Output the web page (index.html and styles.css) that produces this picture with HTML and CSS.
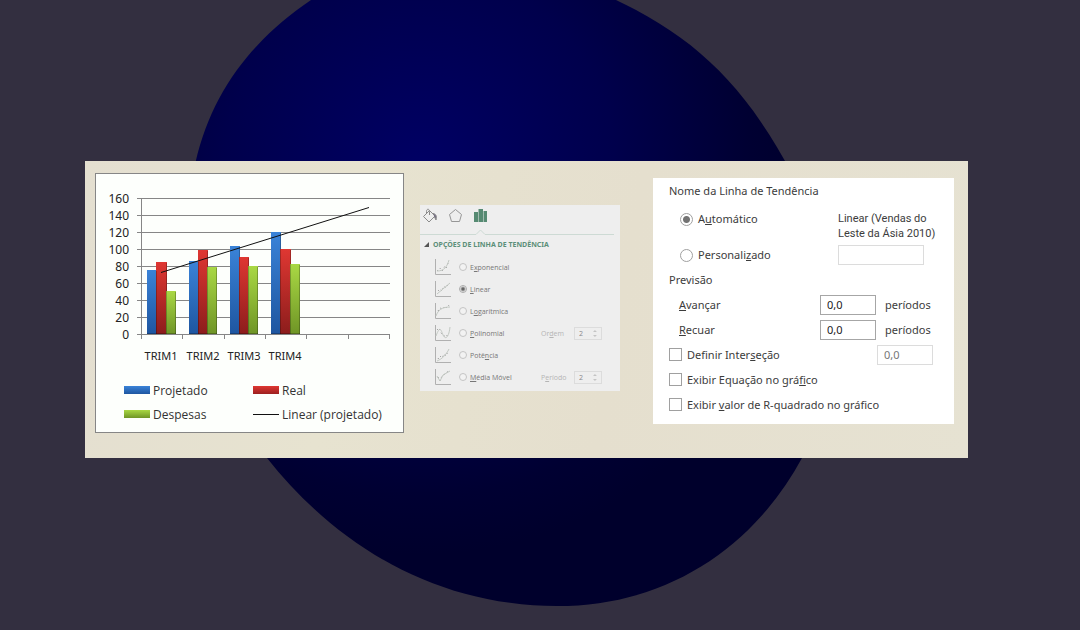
FILE: index.html
```
<!DOCTYPE html>
<html lang="pt-BR">
<head>
  <meta charset="UTF-8">
  <title>Linha de Tendência</title>
  <meta name="viewport" content="width=device-width, initial-scale=1.0">
  <link rel="stylesheet" href="styles.css">
</head>
<body>
  <!-- Blue shape behind the card -->
  <svg class="backdrop" viewBox="0 0 1080 630" preserveAspectRatio="xMidYMid slice" aria-hidden="true">
    <defs>
      <radialGradient id="glow" gradientUnits="userSpaceOnUse" cx="420" cy="165" r="390">
        <stop offset="0" stop-color="#000064"/>
        <stop offset="0.5" stop-color="#00004c"/>
        <stop offset="0.85" stop-color="#000032"/>
        <stop offset="1" stop-color="#00002c"/>
      </radialGradient>
    </defs>
    <path fill="url(#glow)" d="M311 0C230 55 188 130 188 235C188 340 230 415 267 458C340 550 440 606 557 606C670 606 755 545 802 458C850 360 840 260 785 161C740 80 690 35 616 0C520 -60 400 -60 311 0Z"/>
  </svg>

  <main class="card">
    <!-- Chart -->
    <section class="chart">
      <svg class="plot" viewBox="0 0 307 198" role="img" aria-label="Projetado, Real e Despesas por trimestre">
        <defs>
          <linearGradient id="blue" x2="0" y2="1"><stop stop-color="#3a83d8"/><stop offset="1" stop-color="#1e56a0"/></linearGradient>
          <linearGradient id="red" x2="0" y2="1"><stop stop-color="#df3732"/><stop offset="1" stop-color="#8c1d1c"/></linearGradient>
          <linearGradient id="green" x2="0" y2="1"><stop stop-color="#a9d844"/><stop offset="1" stop-color="#6f9526"/></linearGradient>
        </defs>
        <path class="grid" d="M41 24.500H294M41 41.500H294M41 58.500H294M41 75.500H294M41 92.500H294M41 109.500H294M41 126.500H294M41 143.500H294M41 160.500H294M45.500 24V165M86.500 160V165M128.500 160V165M169.500 160V165M210.500 160V165M252.500 160V165M293.500 160V165"/>
        <g class="axis y-axis">
          <text x="33" y="29">160</text>
          <text x="33" y="46">140</text>
          <text x="33" y="63">120</text>
          <text x="33" y="80">100</text>
          <text x="33" y="97">80</text>
          <text x="33" y="114">60</text>
          <text x="33" y="131">40</text>
          <text x="33" y="148">20</text>
          <text x="33" y="165">0</text>
        </g>
        <g fill="url(#blue)">
          <rect x="51" y="96" width="10" height="64"/>
          <rect x="93" y="87" width="10" height="73"/>
          <rect x="134" y="72" width="10" height="88"/>
          <rect x="175" y="58" width="10" height="102"/>
        </g>
        <g fill="url(#red)">
          <rect x="60" y="88" width="11" height="72"/>
          <rect x="102" y="76" width="10" height="84"/>
          <rect x="143" y="83" width="10" height="77"/>
          <rect x="184" y="75" width="11" height="85"/>
        </g>
        <g fill="url(#green)">
          <rect x="70" y="117" width="10" height="43"/>
          <rect x="111" y="93" width="10" height="67"/>
          <rect x="152" y="92" width="10" height="68"/>
          <rect x="194" y="90" width="10" height="70"/>
        </g>
        <path class="bar-edge" d="M60.500 97V160M70.500 89V160M79.500 118V160M102.500 88V160M111.500 77V160M120.500 94V160M143.500 73V160M152.500 84V160M161.500 93V160M184.500 59V160M194.500 76V160M203.500 91V160M51 159.500H80M93 159.500H121M134 159.500H162M175 159.500H204"/>
        <path class="trend" d="M65 98.500L273 33.500"/>
        <g class="axis x-axis">
          <text x="65" y="186">TRIM1</text>
          <text x="107" y="186">TRIM2</text>
          <text x="148" y="186">TRIM3</text>
          <text x="189" y="186">TRIM4</text>
        </g>
      </svg>
      <ul class="legend">
        <li><span class="swatch blue"></span>Projetado</li>
        <li><span class="swatch red"></span>Real</li>
        <li><span class="swatch green"></span>Despesas</li>
        <li><span class="swatch line"></span>Linear (projetado)</li>
      </ul>
    </section>

    <!-- Trendline type -->
    <section class="options">
      <div class="tabs">
        <button type="button" aria-label="Preenchimento">
          <svg width="16" height="16" viewBox="0 0 16 16" fill="none" stroke="#8b8b8b"><path d="M1.500 8.500L7.500 2.500L13 8L7 14ZM4.500 5.500V3.500C4.500 .5 7.500 .5 7.500 3.500V7"/><path d="M11 5.500C14 6 15 8 14 12L12.500 9" fill="#777083"/></svg>
        </button>
        <button type="button" aria-label="Efeitos">
          <svg width="16" height="16" viewBox="0 0 16 16" fill="none" stroke="#969696"><path d="M7.500 1.500L13.500 6.500L11.500 13.500H3.500L1.500 6.500Z"/></svg>
        </button>
        <button type="button" aria-label="Opções de linha de tendência">
          <svg width="16" height="16" viewBox="0 0 16 16" fill="#568a72"><path d="M0 4H4V14H0ZM4.500 1H9V14H4.500ZM9.500 3H13V14H9.500Z"/></svg>
        </button>
      </div>
      <svg class="divider" viewBox="0 0 194 6" fill="none" aria-hidden="true"><path d="M0 5.500H56L60.500 1L65 5.500H194"/></svg>
      <h2><svg width="5" height="5" viewBox="0 0 5 5" aria-hidden="true"><path d="M5 0V5H0Z" fill="#555"/></svg>OPÇÕES DE LINHA DE TENDÊNCIA</h2>
      <div class="types">
        <div class="type">
          <svg class="mini" viewBox="0 0 17 17"><path class="frame" d="M1.500 0V15.500H17"/><path class="dots" d="M3 12L6 9L8 12L11 7L12 9L15 2"/><path class="curve" d="M3 12C10 12 13 8 15 1"/></svg>
          <input type="radio" name="type" id="exp"><label for="exp">E<u>x</u>ponencial</label>
        </div>
        <div class="type">
          <svg class="mini" viewBox="0 0 17 17"><path class="frame" d="M1.500 0V15.500H17"/><path class="dots" d="M4 10L6 8L8 10L10 5L12 7L14 3"/><path class="curve" d="M3 13L16 2"/></svg>
          <input type="radio" name="type" id="lin" checked><label for="lin"><u>L</u>inear</label>
        </div>
        <div class="type">
          <svg class="mini" viewBox="0 0 17 17"><path class="frame" d="M1.500 0V15.500H17"/><path class="dots" d="M4 8L6 5L9 6L11 3L13 5L15 2"/><path class="curve" d="M2 13C4 7 8 4 16 4"/></svg>
          <input type="radio" name="type" id="log"><label for="log">L<u>o</u>garítmica</label>
        </div>
        <div class="type">
          <svg class="mini" viewBox="0 0 17 17"><path class="frame" d="M1.500 0V15.500H17"/><path class="dots" d="M3 5L5 3L7 8L9 10L12 12L14 9"/><path class="curve" d="M2 11C6 0 7 5 9 10C12 16 15 11 16 2"/></svg>
          <input type="radio" name="type" id="pol"><label for="pol"><u>P</u>olinomial</label>
          <label class="extra" for="order">Or<u>d</u>em</label>
          <span class="spin"><input type="text" id="order" value="2" disabled><svg width="5" height="9" viewBox="0 0 5 9"><path d="M0 2.500L2.500 0L5 2.500ZM0 6.500L2.500 9L5 6.500Z" fill="#c4c4c4"/></svg></span>
        </div>
        <div class="type">
          <svg class="mini" viewBox="0 0 17 17"><path class="frame" d="M1.500 0V15.500H17"/><path class="dots" d="M4 12L6 9L8 11L10 7L12 9L14 4"/><path class="curve" d="M3 14C8 12 12 8 15 2"/></svg>
          <input type="radio" name="type" id="pow"><label for="pow">Potê<u>n</u>cia</label>
        </div>
        <div class="type">
          <svg class="mini" viewBox="0 0 17 17"><path class="frame" d="M1.500 0V15.500H17"/><path class="dots" d="M4 8L6 12L8 7L11 5L13 3L15 2"/><path class="curve" d="M3 7L6 12L9 6L16 2"/></svg>
          <input type="radio" name="type" id="avg"><label for="avg"><u>M</u>édia Móvel</label>
          <label class="extra" for="period">P<u>e</u>ríodo</label>
          <span class="spin"><input type="text" id="period" value="2" disabled><svg width="5" height="9" viewBox="0 0 5 9"><path d="M0 2.500L2.500 0L5 2.500ZM0 6.500L2.500 9L5 6.500Z" fill="#c4c4c4"/></svg></span>
        </div>
      </div>
    </section>

    <!-- Name and forecast -->
    <form class="settings">
      <h2>Nome da Linha de Tendência</h2>
      <div class="name">
        <div class="name-choice">
          <div class="check"><input type="radio" name="name" id="auto" checked><label for="auto">A<u>u</u>tomático</label></div>
          <div class="check"><input type="radio" name="name" id="custom"><label for="custom">Personali<u>z</u>ado</label></div>
        </div>
        <div class="name-value">
          <p>Linear (Vendas do<br>Leste da Ásia 2010)</p>
          <input type="text" class="field light" aria-label="Nome personalizado">
        </div>
      </div>
      <h2>Previsão</h2>
      <div class="row forecast">
        <label for="forward"><u>A</u>vançar</label>
        <input type="text" class="field" id="forward" value="0,0">
        <span>períodos</span>
      </div>
      <div class="row forecast">
        <label for="backward"><u>R</u>ecuar</label>
        <input type="text" class="field" id="backward" value="0,0">
        <span>períodos</span>
      </div>
      <div class="row check">
        <input type="checkbox" id="intercept"><label for="intercept">Definir Inter<u>s</u>eção</label>
        <input type="text" class="field light" value="0,0" aria-label="Interseção" disabled>
      </div>
      <div class="row check">
        <input type="checkbox" id="equation"><label for="equation">Exibir Equação no grá<u>f</u>ico</label>
      </div>
      <div class="row check">
        <input type="checkbox" id="rsquared"><label for="rsquared">Exibir <u>v</u>alor de R-quadrado no gráfico</label>
      </div>
    </form>
  </main>
</body>
</html>
```
FILE: styles.css
```
* {
  box-sizing: border-box;
}

body {
  margin: 0;
  min-height: 100vh;
  padding: 161px 112px 40px 85px;
  background: #332f40;
  color: #3c3c3c;
  font-family: "Open Sans", "Noto Sans", sans-serif;
  font-size: 12px;
}

h2, p, ul {
  margin: 0;
  padding: 0;
  font-size: inherit;
  font-weight: normal;
}

u {
  text-underline-offset: 1px;
}

.backdrop {
  position: fixed;
  inset: 0;
  width: 100%;
  height: 100%;
  z-index: -1;
}

.card {
  display: flex;
  align-items: flex-start;
  padding: 12px 14px 25px 10px;
  background: linear-gradient(100deg, #e4dfd0, #e7e3d0 30%, #e5dfce 60%, #e6e2d2);
}

/* Chart */
.chart {
  width: 309px;
  background: #fdfffc;
  border: 1px solid #868686;
  padding-bottom: 6px;
}

.plot {
  display: block;
  width: 100%;
}

.grid {
  stroke: #868686;
  fill: none;
}

.bar-edge {
  stroke: #000;
  stroke-opacity: 0.25;
  fill: none;
}

.trend {
  stroke: #111;
}

.axis {
  font-family: "Noto Sans", sans-serif;
  font-size: 12px;
  fill: #222;
}

.y-axis {
  text-anchor: end;
}

.x-axis {
  text-anchor: middle;
  font-size: 11px;
}

.legend {
  list-style: none;
  display: grid;
  grid-template-columns: 129px 1fr;
  padding: 6px 0 0 28px;
  color: #333;
}

.legend li {
  display: flex;
  align-items: center;
  gap: 3px;
  height: 24px;
}

.swatch {
  width: 26px;
  height: 8px;
}

.swatch.blue {
  background: linear-gradient(#3a83d8, #1e56a0);
}

.swatch.red {
  background: linear-gradient(#df3732, #9c201f);
}

.swatch.green {
  background: linear-gradient(#a9d844, #6f9526);
}

.swatch.line {
  height: 1px;
  background: #111;
}

/* Trendline type */
.options {
  width: 200px;
  margin: 32px 0 0 16px;
  padding-bottom: 3px;
  background: #eeeeee;
  color: #777;
  font-size: 7px;
}

.tabs {
  display: flex;
  gap: 10px;
  padding: 3px 0 0 2px;
}

.tabs button {
  display: flex;
  padding: 0;
  border: 0;
  background: none;
}

.divider {
  display: block;
  width: 194px;
  height: 6px;
  margin-top: 5px;
  stroke: #cddad4;
}

.options h2 {
  display: flex;
  align-items: center;
  gap: 4px;
  height: 18px;
  padding-left: 4px;
  color: #5c8f79;
  font-family: "Noto Sans", sans-serif;
  font-weight: bold;
}

.types {
  padding-top: 3px;
}

.type {
  display: flex;
  align-items: center;
  height: 22px;
  padding: 0 18px 0 14px;
}

.mini {
  width: 17px;
  height: 17px;
  margin-right: 8px;
  fill: none;
}

.frame {
  stroke: #b0b0b0;
}

.dots {
  stroke: #8a8a8a;
  stroke-dasharray: 1 3;
}

.curve {
  stroke: #c2c8c2;
}

.extra {
  width: 33px;
  margin-left: auto;
  color: #b5b5b5;
}

.spin {
  display: flex;
  align-items: center;
  width: 28px;
  height: 13px;
  padding-right: 4px;
  border: 1px solid #dcdcdc;
}

.spin input {
  width: 100%;
  min-width: 0;
  padding: 0 0 0 4px;
  border: 0;
  background: none;
  color: #888;
  font: inherit;
}

/* Radios and tick boxes */
input[type="radio"],
input[type="checkbox"] {
  appearance: none;
  flex: none;
  width: 13px;
  height: 13px;
  margin: 0 5px 0 0;
  border: 1px solid #a0a0a0;
  background: #fff;
}

input[type="radio"] {
  border-radius: 50%;
}

input[type="radio"]:checked {
  background: radial-gradient(circle, #737373 3px, #fff 4px);
}

.options input[type="radio"] {
  width: 8px;
  height: 8px;
  margin-right: 3px;
  border-color: #c4c4c4;
  background: #f2f2f2;
}

.options input[type="radio"]:checked {
  border-color: #aaa;
  background: radial-gradient(circle, #666 1px, #f2f2f2 3px);
}

/* Name and forecast */
.settings {
  flex: 1;
  margin: 5px 0 0 33px;
  padding: 0 21px 7px 16px;
  background: #fff;
  font-family: "Noto Sans", sans-serif;
  font-size: 11px;
}

.settings h2 {
  line-height: 25px;
}

.name {
  display: flex;
  justify-content: space-between;
  height: 64px;
}

.name-choice {
  display: flex;
  flex-direction: column;
  gap: 20px;
  padding: 8px 0 0 11px;
}

.check {
  display: flex;
  align-items: center;
  line-height: 16px;
}

.name-value {
  width: 95px;
  padding-top: 8px;
  font-family: Roboto, sans-serif;
  line-height: 15px;
  white-space: nowrap;
}

.name-value .field {
  display: block;
  width: 86px;
  margin-top: 4px;
}

.field {
  width: 56px;
  height: 20px;
  padding: 0 6px;
  border: 1px solid #a6a6a6;
  background: #fff;
  color: #222;
  font: inherit;
}

.field.light {
  border-color: #dcdcdc;
  color: #777;
}

.row {
  height: 25px;
}

.row .field.light {
  margin-left: auto;
}

.forecast {
  display: grid;
  grid-template-columns: 1fr 56px 48px;
  column-gap: 9px;
  align-items: center;
  padding-left: 10px;
}
```
